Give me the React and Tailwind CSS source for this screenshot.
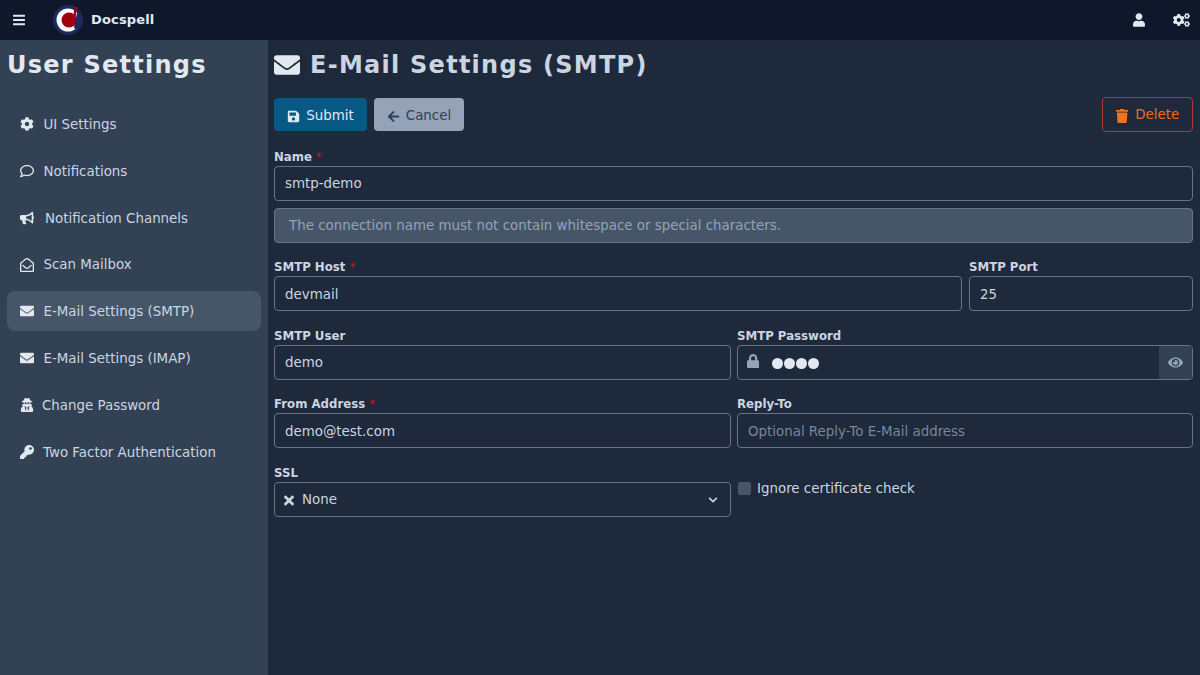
import {
  FaArrowLeft,
  FaBars,
  FaBullhorn,
  FaChevronDown,
  FaCog,
  FaCogs,
  FaEnvelope,
  FaEye,
  FaKey,
  FaLock,
  FaRegComment,
  FaRegEnvelopeOpen,
  FaSave,
  FaTimes,
  FaTrash,
  FaUser,
  FaUserSecret,
} from "react-icons/fa";

const menu = [
  { label: "UI Settings", icon: FaCog, gap: "gap-[9.5px]" },
  { label: "Notifications", icon: FaRegComment, gap: "gap-[9.5px]" },
  { label: "Notification Channels", icon: FaBullhorn, gap: "gap-[11px]" },
  { label: "Scan Mailbox", icon: FaRegEnvelopeOpen, gap: "gap-[9.5px]" },
  { label: "E-Mail Settings (SMTP)", icon: FaEnvelope, gap: "gap-[9.5px]", active: true },
  { label: "E-Mail Settings (IMAP)", icon: FaEnvelope, gap: "gap-[9.5px]" },
  { label: "Change Password", icon: FaUserSecret, gap: "gap-[8px]" },
  { label: "Two Factor Authentication", icon: FaKey, gap: "gap-[9px]" },
];

const inputBox =
  "h-[35px] w-full rounded border border-[#64748b] bg-[#1e293b] px-[10px] pt-[2px] flex items-center text-[13.4px] text-[#cbd5e1]";

function Label({ children, required }) {
  return (
    <div className="h-[20px] text-[11.75px] leading-[22px] font-bold text-[#cbd5e1]">
      {children}
      {required && <span className="ml-1 font-normal text-[#b91c1c]">*</span>}
    </div>
  );
}

function Field({ label, required, value, className }) {
  return (
    <div className={className}>
      <Label required={required}>{label}</Label>
      <div className={inputBox}>{value}</div>
    </div>
  );
}

export default function App() {
  return (
    <div className="h-[675px] w-[1200px] overflow-hidden bg-[#1e293b] font-['DejaVu_Sans',sans-serif]">
      <header className="flex h-10 items-center bg-[#0f172a] pr-[10px] pl-[13px] text-[#e2e8f0]">
        <FaBars className="h-[14px] w-[12px]" />
        <svg viewBox="0 0 30 30" className="ml-[28px] h-[30px] w-[30px]">
          <circle cx="15" cy="15" r="15" fill="#1e2a5e" />
          <circle cx="15" cy="15" r="11.5" fill="#f8fafc" />
          <circle cx="16" cy="15" r="7.5" fill="#a00010" />
          <path d="M24 8 L27 8 L27 22 L22 24 L21 22.5 Z" fill="#1e2a5e" />
          <path d="M21.5 2 L24 2 L21.5 21 L19 21 Z" fill="#a00010" />
        </svg>
        <span className="ml-[8px] text-[13px] font-bold tracking-[0.15px] text-[#e2e8f0]">Docspell</span>
        <div className="ml-auto flex items-center gap-[28px]">
          <FaUser className="h-[14px] w-[12px]" />
          <FaCogs className="h-[14px] w-[17px]" />
        </div>
      </header>

      <div className="flex h-[635px]">
        <aside className="w-[268px] shrink-0 bg-[#334155] px-[7px]">
          <h1 className="mt-[7px] h-[36px] text-2xl leading-[36px] font-bold tracking-[1.25px] text-[#e2e8f0]">
            User Settings
          </h1>
          <nav className="mt-[21px] flex flex-col gap-[6.85px]">
            {menu.map((item) => {
              const Icon = item.icon;
              return (
                <div
                  key={item.label}
                  className={`flex h-10 items-center rounded-lg pl-[13px] text-[13.4px] text-[#cbd5e1] ${item.gap} ${
                    item.active ? "bg-[#475569]" : ""
                  }`}
                >
                  <Icon className="h-[14px] w-auto shrink-0 text-[#e2e8f0]" />
                  <span className="pt-[2px]">{item.label}</span>
                </div>
              );
            })}
          </nav>
        </aside>

        <main className="min-w-0 flex-1 pr-[7px] pl-[6px]">
          <h2 className="mt-[7px] flex h-[36px] items-center gap-[10px] text-2xl font-bold tracking-[1.26px] text-[#cbd5e1]">
            <FaEnvelope className="h-[26px] w-[26px] text-[#e2e8f0]" />
            <span>E-Mail Settings (SMTP)</span>
          </h2>

          <div className="mt-[15px] flex h-[34px] items-start">
            <div className="flex h-[33px] w-[93px] items-center justify-center gap-[6px] rounded bg-[#075985] pt-[3px] text-[13.4px] text-[#e2e8f0]">
              <FaSave className="h-[13px] w-[13px]" />
              Submit
            </div>
            <div className="ml-[7px] flex h-[33px] w-[90px] items-center justify-center gap-[6px] rounded bg-[#94a3b8] pt-[3px] text-[13.4px] text-[#334155]">
              <FaArrowLeft className="h-[13px] w-[13px]" />
              Cancel
            </div>
            <div className="-mt-px ml-auto flex h-[35px] w-[91px] items-center justify-center gap-[7px] rounded border border-[#b4343c] pt-[2px] text-[13.4px] text-[#ef6c1a]">
              <FaTrash className="h-[14px] w-[12.25px] text-[#f97316]" />
              Delete
            </div>
          </div>

          <div className="mt-[14px]">
            <Field label="Name" required value="smtp-demo" />
            <div className="mt-[7px] flex h-[34.5px] items-center rounded border border-[#64748b] bg-[#475569] px-[14px] pt-[2px] text-[13.4px] text-[#94a3b8]">
              The connection name must not contain whitespace or special characters.
            </div>
          </div>

          <div className="mt-[13.75px] flex gap-[7px]">
            <Field className="flex-1" label="SMTP Host" required value="devmail" />
            <Field className="w-[224px]" label="SMTP Port" value="25" />
          </div>

          <div className="mt-[13.5px] grid grid-cols-[457px_1fr] gap-[6px]">
            <Field label="SMTP User" value="demo" />
            <div>
              <Label>SMTP Password</Label>
              <div className="flex h-[35px] items-center overflow-hidden rounded border border-[#64748b] text-[#e2e8f0]">
                <FaLock className="mb-[3px] ml-[9px] h-[14px] w-[12.25px] text-[#94a3b8]" />
                <span className="mt-[2px] ml-[13px] flex gap-[1px]">
                  <i className="h-[11px] w-[11px] rounded-full bg-[#e2e8f0]" />
                  <i className="h-[11px] w-[11px] rounded-full bg-[#e2e8f0]" />
                  <i className="h-[11px] w-[11px] rounded-full bg-[#e2e8f0]" />
                  <i className="h-[11px] w-[11px] rounded-full bg-[#e2e8f0]" />
                </span>
                <span className="ml-auto flex h-full w-[33px] items-center justify-center bg-[#334155]">
                  <FaEye className="h-[15px] w-[15px] text-[#94a3b8]" />
                </span>
              </div>
            </div>
          </div>

          <div className="mt-[13.5px] grid grid-cols-[457px_1fr] gap-[6px]">
            <Field label="From Address" required value="demo@test.com" />
            <Field label="Reply-To" value={<span className="text-[#78869b]">Optional Reply-To E-Mail address</span>} />
          </div>

          <div className="mt-[13.5px] grid grid-cols-[457px_1fr] gap-[6px]">
            <div>
              <Label>SSL</Label>
              <div className={`${inputBox} gap-[8px]`}>
                <FaTimes className="-ml-px h-[15px] w-[10px] text-[#cbd5e1]" />
                <span>None</span>
                <FaChevronDown className="mr-[2px] ml-auto h-[10px] w-[10px] text-[#cbd5e1]" />
              </div>
            </div>
            <div className="flex items-start gap-[6px] pt-[20px] pl-px">
              <div className="h-[13px] w-[13px] rounded-[2px] bg-[#475569]" />
              <span className="-mt-[2px] text-[13.4px] leading-[17px] text-[#cbd5e1]">Ignore certificate check</span>
            </div>
          </div>
        </main>
      </div>
    </div>
  );
}
